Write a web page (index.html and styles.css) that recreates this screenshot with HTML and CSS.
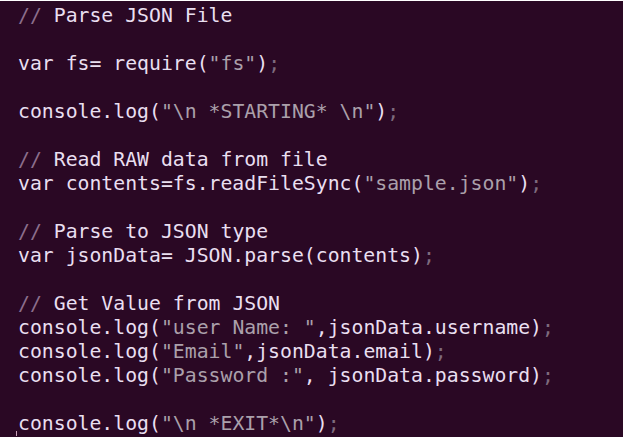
FILE: index.html
```html
<!DOCTYPE html>
<html>
<head>
<meta charset="utf-8">
<link rel="stylesheet" href="styles.css">
</head>
<body>
<div class="editor">
<pre class="code"><span class="c">//</span> Parse JSON File

var fs= require(<span class="s">"fs"</span>)<span class="p">;</span>

console.log(<span class="s">"\n *STARTING* \n"</span>)<span class="p">;</span>

<span class="c">//</span> Read RAW data from file
var contents=fs.readFileSync(<span class="s">"sample.json"</span>)<span class="p">;</span>

<span class="c">//</span> Parse to JSON type
var jsonData= JSON.parse(contents)<span class="p">;</span>

<span class="c">//</span> Get Value from JSON
console.log(<span class="s">"user Name: "</span>,jsonData.username)<span class="p">;</span>
console.log(<span class="s">"Email"</span>,jsonData.email)<span class="p">;</span>
console.log(<span class="s">"Password :"</span>, jsonData.password)<span class="p">;</span>

console.log(<span class="s">"\n *EXIT*\n"</span>)<span class="p">;</span></pre>
<span class="caret"></span>
</div>
</body>
</html>
```
FILE: styles.css
```css
html, body {
  margin: 0;
  padding: 0;
  background: #ffffff;
}
body {
  width: 626px;
  height: 442px;
  overflow: hidden;
}
.editor {
  position: relative;
  box-sizing: border-box;
  width: 623px;
  height: 436px;
  margin-top: 1px;
  background: #2a0824;
  padding: 3px 0 0 18px;
}
.code {
  margin: 0;
  font-family: "DejaVu Sans Mono", "Liberation Mono", monospace;
  font-size: 19.8px;
  line-height: 24px;
  color: #e9dff0;
  letter-spacing: 0;
}
.c {
  color: #8c6f8c;
}
.s {
  color: #aba0ab;
}
.p {
  color: #7d6a7d;
}
.caret {
  position: absolute;
  left: 16px;
  bottom: 1px;
  width: 1px;
  height: 5px;
  background: #c8a0b8;
}
```
